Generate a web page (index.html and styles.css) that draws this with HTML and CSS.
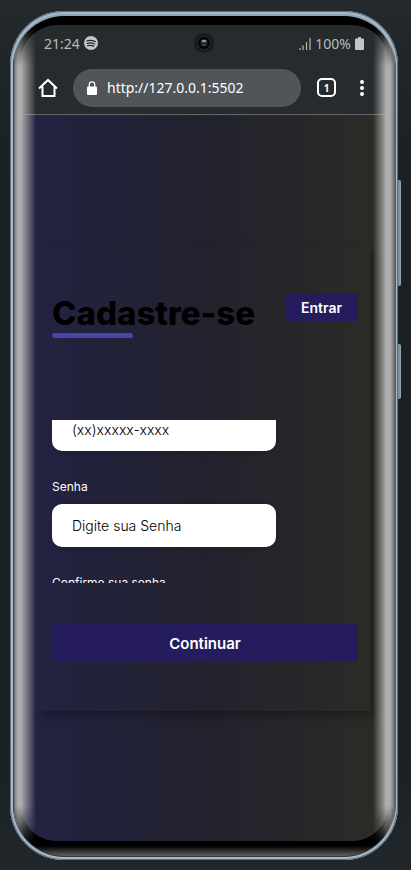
FILE: index.html
```html
<!DOCTYPE html>
<html lang="pt-BR">
<head>
<meta charset="utf-8">
<meta name="viewport" content="width=device-width, initial-scale=1">
<title>Cadastre-se</title>
<link rel="stylesheet" href="styles.css">
</head>
<body>
<div class="phone">
  <span class="side-button volume"></span>
  <span class="side-button power"></span>
  <div class="screen">
    <header class="system">
      <div class="status">
        <div class="status-group">
          <span>21:24</span>
          <svg width="14" height="14" viewBox="0 0 14 14" aria-hidden="true"><circle cx="7" cy="7" r="7" fill="#c3c4c5"/><path d="M3 4.800q4-1.300 8.200.8M3.300 7.300q3.700-1.100 7 .7M3.700 9.600q3.200-.8 5.900.6" fill="none" stroke="#262b2e" stroke-width="1.300" stroke-linecap="round"/></svg>
        </div>
        <svg class="camera" width="20" height="20" viewBox="0 0 20 20" aria-hidden="true"><circle cx="10" cy="10" r="10" fill="#17191a"/><circle cx="10" cy="10" r="8" fill="#1e2021"/><circle cx="10" cy="10" r="6" fill="#050505"/><circle cx="10" cy="10" r="3.500" fill="#23272c"/><ellipse cx="10" cy="8" rx="2.500" ry="1.200" fill="#89919a"/><ellipse cx="10" cy="12" rx="2" ry="1" fill="#3a3f45"/></svg>
        <div class="status-group">
          <svg width="12" height="13" viewBox="0 0 12 13" aria-hidden="true"><path d="M1 11v2M4 8.500V13M7.500 5v8M11 1v12" stroke="#b9babb" stroke-width="1.200"/></svg>
          <span>100%</span>
          <svg width="9" height="13" viewBox="0 0 9 13" aria-hidden="true"><path d="M3 0h3v1.500h2q1 0 1 1V12q0 1-1 1H1q-1 0-1-1V2.500q0-1 1-1h2z" fill="#c3c4c5"/></svg>
        </div>
      </div>
      <div class="toolbar">
        <button class="tool" type="button" aria-label="Início"><svg width="20" height="20" viewBox="0 0 20 20"><path d="M1 10.500 10 2l9 8.500M4.500 8.500V18h12V8.500" fill="none" stroke="#fff" stroke-width="2"/></svg></button>
        <div class="address">
          <svg width="10" height="14" viewBox="0 0 10 14" aria-hidden="true"><path d="M2.300 6V3.500a2.700 2.700 0 0 1 5.400 0V6" fill="none" stroke="#fff" stroke-width="1.300"/><rect y="5.500" width="10" height="8.500" rx="1" fill="#fff"/></svg>
          <span>http://127.0.0.1:5502</span>
        </div>
        <button class="tool tabs" type="button" aria-label="Abas"><span>1</span></button>
        <button class="tool" type="button" aria-label="Menu"><svg width="4" height="16" viewBox="0 0 4 16"><g fill="#fff"><circle cx="2" cy="2" r="2"/><circle cx="2" cy="8" r="2"/><circle cx="2" cy="14" r="2"/></g></svg></button>
      </div>
    </header>
    <main class="page">
      <form class="card">
        <div class="heading">
          <h1>Cadastre-se</h1>
          <button class="button login" type="button">Entrar</button>
        </div>
        <div class="fields">
          <div class="field"><input type="tel" placeholder="(xx)xxxxx-xxxx" aria-label="Celular"></div>
          <div class="field"><label for="senha">Senha</label><input id="senha" type="password" placeholder="Digite sua Senha"></div>
          <div class="field"><label for="confirma">Confirme sua senha</label><input id="confirma" type="password"></div>
        </div>
        <button class="button submit" type="submit">Continuar</button>
      </form>
    </main>
  </div>
</div>
</body>
</html>
```
FILE: styles.css
```css
* { box-sizing: border-box; }

body {
  margin: 0;
  min-height: 100vh;
  display: flex;
  padding: 11px 13px 10px 10px;
  background: linear-gradient(#23292c, #1b2022 20%, #1b2022 85%, #20262a);
  font-family: Inter, "Liberation Sans", sans-serif;
}

button { border: 0; padding: 0; font-family: inherit; cursor: pointer; }

.phone {
  position: relative;
  flex: 1;
  display: flex;
  padding: 14px 10px 19px 11px;
  border-radius: 54px;
  background:
    linear-gradient(#000, #000 calc(100% - 14px), #606060 calc(100% - 4px));
  box-shadow: inset 0 0 0 1px #62707b, inset 0 0 0 3px #a5b9c8, inset 0 2px 0 3px #8fa3b3, inset 0 0 0 4px #33383c;
}

/* Curved glass reflection along both edges */
.phone::after {
  content: "";
  position: absolute;
  inset: 5px 2px 4px 3px;
  border-radius: 50px;
  background:
    linear-gradient(to right, #333 0, #858585 2px, #aeaeae 5px, #aeaeae 8px, rgb(174 174 174 / 65%) 13px, rgb(174 174 174 / 35%) 18px, transparent 23px) left / 24px 100% no-repeat,
    linear-gradient(to left, #505050 0, #858585 3px, #aeaeae 6px, #aeaeae 10px, rgb(174 174 174 / 65%) 14px, rgb(174 174 174 / 30%) 19px, transparent 23px) right / 24px 100% no-repeat;
  -webkit-mask-image: linear-gradient(transparent 4px, #000 50px, #000 calc(100% - 50px), transparent calc(100% - 10px));
  mask-image: linear-gradient(transparent 4px, #000 50px, #000 calc(100% - 50px), transparent calc(100% - 10px));
  pointer-events: none;
}

.side-button {
  position: absolute;
  left: 100%;
  width: 3px;
  border-radius: 0 2px 2px 0;
  background: linear-gradient(to right, #6f7f8b, #9aabb8);
}
.volume { top: 169px; height: 106px; }
.power { top: 333px; height: 55px; }

.screen {
  flex: 1;
  min-width: 0;
  display: flex;
  flex-direction: column;
  overflow: hidden;
  border-radius: 36px;
  background: #262b2e;
}

.system {
  border-bottom: 1px solid #65686a;
  font-family: "Noto Sans", "Open Sans", sans-serif;
}

.status {
  display: grid;
  grid-template-columns: 1fr auto 1fr;
  align-items: center;
  height: 36px;
  padding: 0 24px 0 23px;
  color: #b9babb;
  font-size: 14px;
}
.status-group { display: flex; align-items: center; gap: 4px; }
.status-group:last-child { justify-content: flex-end; }

.toolbar {
  display: flex;
  align-items: center;
  height: 53px;
  padding: 0 24px 0 17px;
}
.tool { display: flex; align-items: center; justify-content: center; background: none; }

.address {
  flex: 1;
  display: flex;
  align-items: center;
  gap: 10px;
  height: 38px;
  margin: 0 16px 0 15px;
  padding: 0 14px;
  border-radius: 19px;
  background: #515459;
  color: #fff;
  font-size: 14px;
}

.tabs {
  width: 19px;
  height: 19px;
  margin-right: 24px;
  border: 2px solid #fff;
  border-radius: 5px;
  color: #fff;
  font-size: 10px;
  font-weight: 700;
}

.page {
  flex: 1;
  display: flex;
  align-items: center;
  padding: 0 18px 0 16px;
  background: linear-gradient(to right, #232244, #22222e 50%, #2c2c26);
}

.card {
  flex: 1;
  padding: 48px 12px 49px 15px;
  box-shadow: 5px 5px 10px rgb(0 0 0 / 30%);
}

.heading {
  display: flex;
  align-items: flex-start;
  justify-content: space-between;
}

h1 { margin: 0; color: #000; font-size: 33px; line-height: 40px; font-weight: 800; }
h1::after {
  content: "";
  display: block;
  width: 81px;
  height: 5px;
  border-radius: 3px;
  background: #4646a6;
}

.button { background: #241c5c; color: #fff; border-radius: 4px; font-weight: 600; }
.login { width: 73px; height: 28px; font-size: 14px; }
.submit { width: 100%; height: 38px; font-size: 15px; }

.fields {
  display: flex;
  flex-direction: column;
  gap: 28px;
  height: 163px;
  margin: 82px 0 41px;
  overflow: hidden;
}
.field { display: flex; flex-direction: column; gap: 9px; flex: none; }
.field:first-child { margin-top: -12px; }
.field label { color: #fff; font-size: 12px; line-height: 16px; }
.field input {
  width: 224px;
  height: 43px;
  padding: 0 20px;
  border: 0;
  border-radius: 10px;
  background: #fff;
  box-shadow: 1px 1px 6px rgb(0 0 0 / 20%);
  font: 14px Inter, sans-serif;
}
.field input::placeholder { color: #000; font-weight: 300; opacity: 1; }
```
